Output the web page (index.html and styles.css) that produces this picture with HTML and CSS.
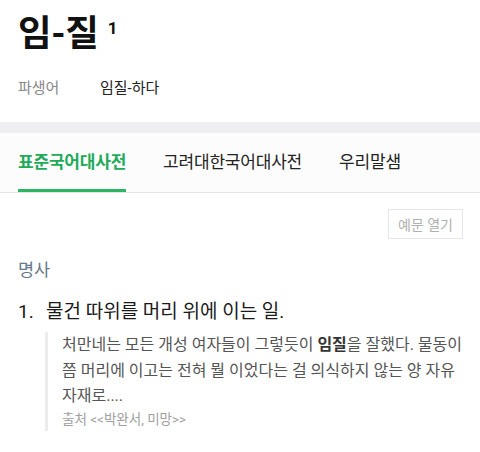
FILE: index.html
```html
<!DOCTYPE html>
<html lang="ko">
<head>
<meta charset="utf-8">
<link rel="stylesheet" href="styles.css">
</head>
<body>
<header class="entry">
  <h1 class="headword">임-질<sup class="homonym">1</sup></h1>
  <div class="deriv">
    <span class="deriv-label">파생어</span>
    <span class="deriv-word">임질-하다</span>
  </div>
</header>
<div class="band"></div>
<nav class="tabs">
  <span class="tab active">표준국어대사전</span>
  <span class="tab">고려대한국어대사전</span>
  <span class="tab">우리말샘</span>
</nav>
<main class="content">
  <div class="tools"><button class="ex-btn">예문 열기</button></div>
  <div class="pos">명사</div>
  <ol class="senses">
    <li class="sense">
      <div class="def"><span class="num">1.</span><span>물건 따위를 머리 위에 이는 일.</span></div>
      <blockquote class="example">
        <p class="ex-text">처만네는 모든 개성 여자들이 그렇듯이 <b>임질</b>을 잘했다. 물동이 쯤 머리에 이고는 전혀 뭘 이었다는 걸 의식하지 않는 양 자유자재로....</p>
        <p class="ex-src">출처 &lt;&lt;박완서, 미망&gt;&gt;</p>
      </blockquote>
    </li>
  </ol>
</main>
</body>
</html>
```
FILE: styles.css
```css
* { box-sizing: border-box; }
html, body { margin: 0; padding: 0; background: #fff; }
body {
  font-family: Roboto, "Noto Sans CJK KR", sans-serif;
  color: #222;
  width: 480px;
  overflow: hidden;
}
.entry { padding: 10px 18px 0; height: 122px; }
.headword {
  margin: 0;
  font-size: 36.5px;
  font-weight: 700;
  line-height: 48px;
  color: #111;
  letter-spacing: -0.3px;
}
.homonym {
  font-size: 17px;
  font-weight: 700;
  vertical-align: top;
  position: relative;
  top: -6px;
  margin-left: 9px;
}
.deriv { margin-top: 19px; display: flex; font-size: 15px; line-height: 22px; }
.deriv-label { color: #888; width: 82px; }
.deriv-word { color: #222; }
.band { height: 11px; background: #efeff1; }
.tabs {
  display: flex;
  gap: 37px;
  padding: 0 18px;
  height: 60px;
  border-bottom: 1px solid #e6e6e6;
  background: #fcfcfc;
  align-items: stretch;
}
.tab {
  font-size: 17px;
  line-height: 58px;
  color: #222;
  letter-spacing: -0.2px;
  border-bottom: 3px solid transparent;
}
.tab.active { color: #22aa5a; font-weight: 700; border-bottom-color: #2eb563; }
.content { padding: 16px 17px 0 18px; }
.tools { display: flex; justify-content: flex-end; }
.ex-btn {
  font-family: inherit;
  font-size: 14px;
  color: #b0b0b0;
  background: #fff;
  border: 1px solid #e6e6e6;
  height: 30px;
  width: 75px;
  padding: 0;
}
.pos { margin-top: 19px; font-size: 17.5px; line-height: 24px; color: #66788a; }
.senses { list-style: none; margin: 17px 0 0; padding: 0; }
.def { display: flex; font-size: 19px; line-height: 26px; color: #1a1a1a; }
.num { width: 28px; }
.example {
  margin: 7px 0 0 27px;
  padding: 0 0 2px 14px;
  border-left: 3px solid #ececec;
}
.ex-text { margin: 0; font-size: 16px; line-height: 25.5px; color: #555; }
.ex-text b { color: #333; }
.ex-src { margin: 0; font-size: 13.5px; line-height: 20px; color: #a0a0a0; }
```
